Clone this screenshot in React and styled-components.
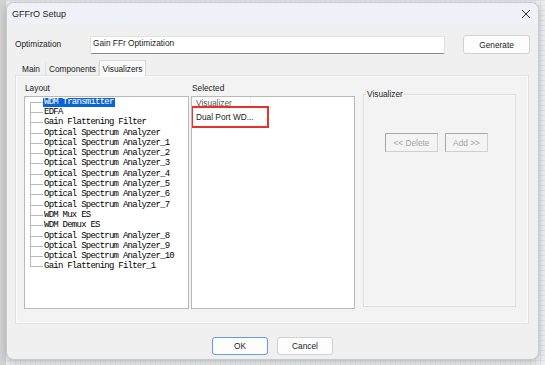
import React from 'react';
import styled, { createGlobalStyle } from 'styled-components';

const Global = createGlobalStyle`
  html, body { margin: 0; padding: 0; }
  body {
    width: 545px;
    height: 365px;
    overflow: hidden;
    font-family: "Liberation Sans", Arial, sans-serif;
    background-color: #eceef2;
    background-image:
      linear-gradient(90deg, #d3d3d3 0 6px, transparent 6px),
      linear-gradient(#dfe2e7 1px, transparent 1px),
      linear-gradient(90deg, #dfe2e7 1px, transparent 1px);
    background-size: 100% 100%, 5px 5px, 5px 5px;
  }
`;

const Dialog = styled.div`
  box-sizing: border-box;
  width: 533px;
  height: 358px;
  margin: 2px 0 0 6px;
  background: #f0f0f0;
  border: 1px solid #c9c9c9;
  border-radius: 8px;
  box-shadow: 0 2px 8px rgba(0, 0, 0, 0.22);
  display: flex;
  flex-direction: column;
  overflow: hidden;
`;

const TitleBar = styled.div`
  height: 21px;
  flex: none;
  display: flex;
  align-items: center;
  justify-content: space-between;
  padding: 0 7px 0 5px;
  background: #eef2f8;
`;

const Title = styled.span`
  font-size: 9px;
  color: #1b1b1b;
`;

const Content = styled.div`
  flex: 1;
  display: flex;
  flex-direction: column;
  padding: 11px 8px 0 8px;
`;

const OptRow = styled.div`
  display: flex;
  align-items: center;
  height: 19px;
`;

const Label = styled.span`
  font-size: 8.3px;
  color: #1b1b1b;
`;

const OptLabel = styled(Label)`
  width: 75px;
  flex: none;
  margin-top: -2px;
`;

const TextInput = styled.div`
  box-sizing: border-box;
  width: 355px;
  height: 18px;
  background: #fff;
  border: 1px solid #e2e2e2;
  border-bottom-color: #8a8a8a;
  border-radius: 2px;
  font-size: 8.3px;
  line-height: 10px;
  color: #1b1b1b;
  padding: 1px 0 0 2px;
`;

const WinButton = styled.div`
  box-sizing: border-box;
  width: ${(p) => p.$w}px;
  height: ${(p) => p.$h || 18}px;
  display: flex;
  align-items: center;
  justify-content: center;
  background: #fdfdfd;
  border: 1px solid ${(p) => (p.$primary ? '#5d9fe0' : '#d2d2d2')};
  border-radius: 3px;
  font-size: 8.3px;
  color: #1b1b1b;
  flex: none;
`;

const GenerateButton = styled(WinButton)`
  margin-left: 18px;
`;

const TabStrip = styled.div`
  display: flex;
  align-items: flex-end;
  height: 15px;
  margin-top: 6px;
  padding-left: 1px;
`;

const Tab = styled.div`
  box-sizing: border-box;
  width: ${(p) => p.$w}px;
  height: ${(p) => (p.$active ? 16 : 13)}px;
  display: flex;
  align-items: center;
  justify-content: center;
  font-size: 8.3px;
  color: #1b1b1b;
  background: ${(p) => (p.$active ? '#f9f9f9' : 'transparent')};
  border: 1px solid ${(p) => (p.$active ? '#d9d9d9' : 'transparent')};
  border-bottom: none;
  border-right-color: ${(p) => (p.$active ? '#d9d9d9' : '#e0e0e0')};
  margin-bottom: ${(p) => (p.$active ? -1 : 0)}px;
  position: relative;
`;

const Panel = styled.div`
  box-sizing: border-box;
  width: 514px;
  height: 249px;
  background: #f3f3f3;
  border: 1px solid #e1e1e1;
  box-shadow: inset 0 0 0 1px #fbfbfb;
  padding: 6px 0 0 8px;
  display: grid;
  grid-template-columns: 165px 164px 159px;
  grid-template-rows: 12px 213px;
  column-gap: 2px;
  row-gap: 2px;
`;

const ColLabel = styled(Label)`
  line-height: 12px;
  padding-left: 1px;
`;

const ListBox = styled.div`
  box-sizing: border-box;
  background: #fff;
  border: 1px solid #b8b8b8;
  overflow: hidden;
  position: relative;
`;

const TreeList = styled.div`
  padding-left: 5px;
  font-family: "Liberation Mono", "DejaVu Sans Mono", monospace;
  font-size: 9px;
  letter-spacing: -0.76px;
  color: #000;
`;

const TreeRow = styled.div`
  display: flex;
  height: 10.3px;
  align-items: center;
`;

const Connector = styled.span`
  width: 13px;
  align-self: stretch;
  flex: none;
  background-image: linear-gradient(#b9b9b9, #b9b9b9), linear-gradient(#b9b9b9, #b9b9b9);
  background-repeat: no-repeat;
  background-size: 12px 1px, 1px ${(p) => (p.$first || p.$last ? '50%' : '100%')};
  background-position: 1px 50%, 0 ${(p) => (p.$first ? '100%' : '0')};
`;

const TreeText = styled.span`
  line-height: 9px;
  padding: 0 1px;
  white-space: pre;
  background: ${(p) => (p.$selected ? '#0a64d2' : 'transparent')};
  color: ${(p) => (p.$selected ? '#fff' : '#000')};
`;

const ListHeader = styled.div`
  display: flex;
  height: 10px;
  overflow: hidden;
`;

const HeaderCell = styled.div`
  width: 59px;
  box-sizing: border-box;
  padding-left: 4px;
  border-right: 1px solid #ececec;
  font-size: 8.3px;
  line-height: 9px;
  padding-top: 2px;
  color: #555;
`;

const ListItem = styled.div`
  padding: 4px 0 0 4px;
  font-size: 8.3px;
  line-height: 12px;
  color: #1b1b1b;
`;

const Highlight = styled.div`
  position: absolute;
  left: -1px;
  top: 9px;
  width: 78px;
  height: 22px;
  box-sizing: border-box;
  border: 2px solid #e8312b;
`;

const GroupBox = styled.fieldset`
  grid-column: 3;
  grid-row: 1 / span 2;
  width: 153px;
  margin: 7px 0 0 6px;
  padding: 0 0 0 2px;
  height: 218px;
  box-sizing: border-box;
  border: 1px solid #dedede;
  box-shadow: inset 0 0 0 1px #f9f9f9;
  min-width: 0;
`;

const Legend = styled.legend`
  font-size: 8.3px;
  line-height: 10px;
  color: #1b1b1b;
  padding: 0 1px;
`;

const GroupButtons = styled.div`
  display: flex;
  gap: 7px;
  margin: 34px 0 0 19px;
`;

const DisabledButton = styled.div`
  box-sizing: border-box;
  width: ${(p) => p.$w}px;
  height: 19px;
  display: flex;
  align-items: center;
  justify-content: center;
  background: #f4f4f4;
  border: 1px solid #cfcfcf;
  border-top-color: #a9a9a9;
  border-left-color: #a9a9a9;
  font-size: 8.3px;
  color: #a6a6a6;
`;

const Footer = styled.div`
  display: flex;
  justify-content: center;
  gap: 9px;
  margin-top: 13px;
`;

const items = [
  'WDM Transmitter',
  'EDFA',
  'Gain Flattening Filter',
  'Optical Spectrum Analyzer',
  'Optical Spectrum Analyzer_1',
  'Optical Spectrum Analyzer_2',
  'Optical Spectrum Analyzer_3',
  'Optical Spectrum Analyzer_4',
  'Optical Spectrum Analyzer_5',
  'Optical Spectrum Analyzer_6',
  'Optical Spectrum Analyzer_7',
  'WDM Mux ES',
  'WDM Demux ES',
  'Optical Spectrum Analyzer_8',
  'Optical Spectrum Analyzer_9',
  'Optical Spectrum Analyzer_10',
  'Gain Flattening Filter_1',
];

const CloseIcon = () => (
  <svg width="10" height="10" viewBox="0 0 10 10">
    <path d="M1 1 L9 9 M9 1 L1 9" stroke="#333" strokeWidth="1" fill="none" />
  </svg>
);

export default function App() {
  return (
    <>
      <Global />
      <Dialog>
        <TitleBar>
          <Title>GFFrO Setup</Title>
          <CloseIcon />
        </TitleBar>
        <Content>
          <OptRow>
            <OptLabel>Optimization</OptLabel>
            <TextInput>Gain FFr Optimization</TextInput>
            <GenerateButton $w={67} $h={19}>Generate</GenerateButton>
          </OptRow>
          <TabStrip>
            <Tab $w={30}>Main</Tab>
            <Tab $w={53}>Components</Tab>
            <Tab $w={47} $active>Visualizers</Tab>
          </TabStrip>
          <Panel>
            <ColLabel>Layout</ColLabel>
            <ColLabel>Selected</ColLabel>
            <GroupBox>
              <Legend>Visualizer</Legend>
              <GroupButtons>
                <DisabledButton $w={53}>&lt;&lt; Delete</DisabledButton>
                <DisabledButton $w={43}>Add &gt;&gt;</DisabledButton>
              </GroupButtons>
            </GroupBox>
            <ListBox>
              <TreeList>
                {items.map((t, i) => (
                  <TreeRow key={i}>
                    <Connector $first={i === 0} $last={i === items.length - 1} />
                    <TreeText $selected={i === 0}>{t}</TreeText>
                  </TreeRow>
                ))}
              </TreeList>
            </ListBox>
            <ListBox>
              <ListHeader>
                <HeaderCell>Visualizer</HeaderCell>
              </ListHeader>
              <ListItem>Dual Port WD...</ListItem>
              <Highlight />
            </ListBox>
          </Panel>
          <Footer>
            <WinButton $w={56} $primary>OK</WinButton>
            <WinButton $w={56}>Cancel</WinButton>
          </Footer>
        </Content>
      </Dialog>
    </>
  );
}
